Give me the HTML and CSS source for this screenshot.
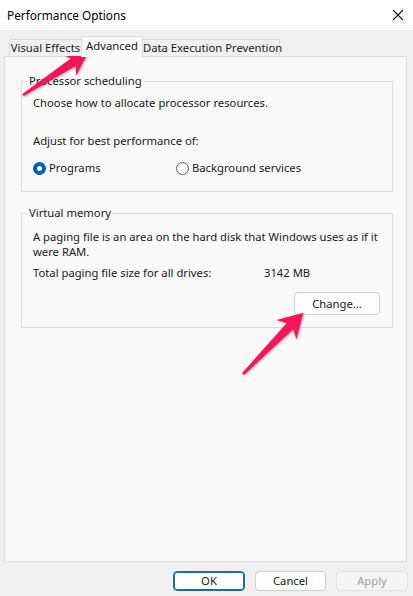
FILE: index.html
```html
<!DOCTYPE html>
<html>
<head>
<meta charset="utf-8">
<link rel="stylesheet" href="styles.css">
</head>
<body>
<div class="window">
  <div class="titlebar">
    <span class="title">Performance Options</span>
    <svg class="close" width="12" height="12" viewBox="0 0 12 12"><path d="M1 1 L11 11 M11 1 L1 11" stroke="#1a1a1a" stroke-width="1.1" fill="none"/></svg>
  </div>
  <div class="content">
    <div class="tabs">
      <div class="tab t1">Visual Effects</div>
      <div class="tab t2 active">Advanced</div>
      <div class="tab t3">Data Execution Prevention</div>
    </div>
    <div class="panel">
      <fieldset class="group g1">
        <legend>Processor scheduling</legend>
        <div class="inner">
          <p class="line">Choose how to allocate processor resources.</p>
          <p class="line adjust">Adjust for best performance of:</p>
          <div class="radios">
            <label class="radio r1"><span class="dot on"></span>Programs</label>
            <label class="radio r2"><span class="dot"></span>Background services</label>
          </div>
        </div>
      </fieldset>
      <fieldset class="group g2">
        <legend>Virtual memory</legend>
        <div class="inner">
          <p class="para">A paging file is an area on the hard disk that Windows uses as if it were RAM.</p>
          <div class="total"><span class="tlabel">Total paging file size for all drives:</span><span class="tval">3142 MB</span></div>
          <div class="change-row"><button class="btn change">Change...</button></div>
        </div>
      </fieldset>
    </div>
    <div class="footer">
      <button class="btn ok">OK</button>
      <button class="btn cancel">Cancel</button>
      <button class="btn apply">Apply</button>
    </div>
  </div>
  <svg class="annotations" width="413" height="596" viewBox="0 0 413 596">
    <polygon transform="translate(23 95) rotate(-33.2)" points="78,0 55,-13 60,-4.5 0,-1.3 0,1.3 60,4.5 55,13" fill="#f7155a"/>
    <polygon transform="translate(243 374) rotate(-45.5)" points="86,0 62,-14 67,-4.5 0,-1.3 0,1.3 67,4.5 62,14" fill="#f7155a"/>
  </svg>
</div>
</body>
</html>
```
FILE: styles.css
```css
* { box-sizing: border-box; }
html, body { margin: 0; padding: 0; }
body {
  width: 413px;
  height: 596px;
  overflow: hidden;
  background: #f0f0f0;
  font-family: "Noto Sans", "Open Sans", sans-serif;
  font-size: 11.25px;
  color: #1a1a1a;
}
.window { position: relative; width: 413px; height: 596px; }
.titlebar {
  height: 30px;
  background: #ffffff;
  display: flex;
  align-items: center;
  justify-content: space-between;
  padding: 0 9px 0 7px;
}
.title { font-size: 11.8px; line-height: 16px; color: #000; }
.close { display: block; }
.content { padding: 6px 6px 0 4px; }
.tabs {
  display: flex;
  align-items: flex-end;
  height: 20px;
  padding-left: 5px;
  position: relative;
  z-index: 1;
}
.tab {
  height: 17px;
  line-height: 16px;
  text-align: center;
  border: 1px solid #dadada;
  border-bottom: none;
  background: #f0f0f0;
  white-space: nowrap;
}
.t1 { width: 72px; border-right: none; }
.t2 { width: 62px; }
.t3 { width: 137px; border-left: none; }
.tab.active {
  height: 21px;
  margin-bottom: -1px;
  background: #f9f9f9;
  line-height: 18px;
}
.panel {
  height: 506px;
  background: #f9f9f9;
  border: 1px solid #dcdcdc;
  padding: 16px 13px 0 16px;
}
.group {
  margin: 0;
  padding: 0 0 0 6px;
  border: 1px solid #dcdcdc;
  min-width: 0;
}
.group legend {
  padding: 0 1px;
  line-height: 16px;
}
.g2 { margin-top: 13px; }
.inner { padding-left: 5px; padding-right: 12px; }
.g1 .inner { padding-top: 6px; padding-bottom: 15px; }
.line { margin: 0; line-height: 16px; }
.adjust { margin-top: 22px; }
.radios { display: flex; margin-top: 11px; height: 16px; align-items: center; }
.radio { display: flex; align-items: center; gap: 3px; line-height: 16px; }
.r1 { width: 143px; }
.dot {
  width: 13px; height: 13px; border-radius: 50%;
  border: 1px solid #5f5f5f;
  background: #fbfbfb;
  display: inline-block;
  position: relative;
}
.dot.on {
  border: none;
  background: #005fb8;
}
.dot.on::after {
  content: "";
  position: absolute;
  left: 4px; top: 4px;
  width: 5px; height: 5px;
  border-radius: 50%;
  background: #fff;
}
.g2 .inner { padding-top: 8px; padding-bottom: 12px; }
.para { margin: 0; line-height: 15px; }
.total { display: flex; margin-top: 6px; line-height: 16px; }
.tlabel { width: 231px; }
.change-row { display: flex; justify-content: flex-end; margin-top: 11px; }
.btn {
  font-family: inherit;
  font-size: 11.25px;
  color: #1a1a1a;
  background: #fdfdfd;
  border: 1px solid #d0d0d0;
  border-radius: 4px;
  padding: 0;
  margin: 0;
  line-height: 16px;
}
.change { width: 86px; height: 23px; }
.footer {
  display: flex;
  justify-content: flex-end;
  gap: 10px;
  padding: 9px 0 0 0;
  margin-right: -1px;
}
.ok { width: 72px; height: 20px; border: 1px solid #2267a6; box-shadow: inset 0 0 0 1px #2267a6; }
.cancel { width: 71px; height: 20px; }
.apply { width: 72px; height: 20px; color: #9e9e9e; background: #f5f5f5; border-color: #e3e3e3; }
.annotations {
  position: absolute;
  left: 0; top: 0;
  pointer-events: none;
  filter: drop-shadow(1px 1.5px 1px rgba(0,0,0,0.3));
}
```
